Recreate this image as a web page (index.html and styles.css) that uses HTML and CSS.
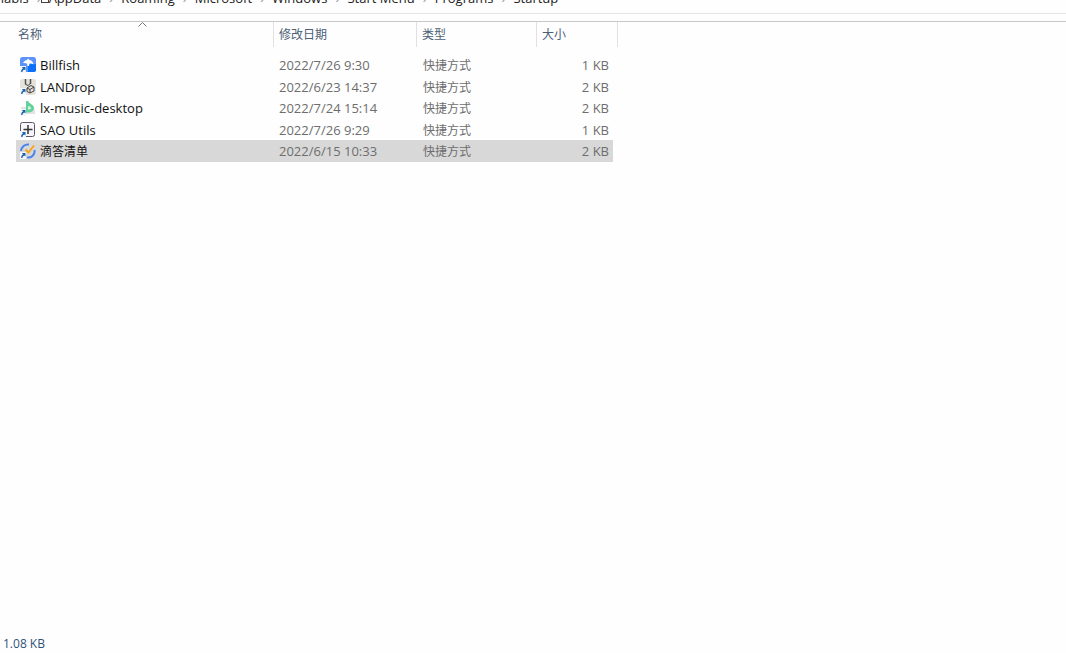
FILE: index.html
```html
<!DOCTYPE html>
<html lang="zh-CN">
<head>
    <meta charset="UTF-8">
    <meta name="viewport" content="width=device-width, initial-scale=1.0">
    <title>Startup</title>
    <link rel="stylesheet" href="styles.css">
</head>
<body>
    <nav class="address">
        <a href="#">nabis</a>
        <span class="sep">›</span>
        <a href="#"><span class="box"></span>AppData</a>
        <span class="sep">›</span>
        <a href="#">Roaming</a>
        <span class="sep">›</span>
        <a href="#">Microsoft</a>
        <span class="sep">›</span>
        <a href="#">Windows</a>
        <span class="sep">›</span>
        <a href="#">Start Menu</a>
        <span class="sep">›</span>
        <a href="#">Programs</a>
        <span class="sep">›</span>
        <a href="#">Startup</a>
    </nav>

    <main class="files">
        <table>
            <colgroup>
                <col class="col-name">
                <col class="col-date">
                <col class="col-type">
                <col class="col-size">
            </colgroup>
            <thead>
                <tr>
                    <th class="name">
                        <button>名称</button>
                        <svg class="sort" width="9" height="5" viewBox="0 0 9 5"><path d="M0.5 4.5 4.5 0.5l4 4" fill="none" stroke="#777"/></svg>
                    </th>
                    <th><button>修改日期</button></th>
                    <th><button>类型</button></th>
                    <th><button>大小</button></th>
                </tr>
            </thead>
            <tbody>
                <tr>
                    <td class="name"><div class="file">
                        <svg class="icon" viewBox="0 0 16 16">
                            <rect width="16" height="15" rx="2.5" fill="#5b93fa"/>
                            <path d="M8 7h8v5.500a2.500 2.500 0 0 1-2.500 2.500H8z" fill="#0b70fa"/>
                            <path d="M3 6C4 4 6 3 7 3l1-1.500L9.500 3C12 3.500 13 5 13.500 7.500 12 6.500 11 6.300 9.500 6.500L9 9H7.500L7 6.500C5.500 6 4.500 5.800 3 6z" fill="#fff"/>
                            <use href="#shortcut"/>
                        </svg>
                        <span>Billfish</span></div></td>
                    <td>2022/7/26 9:30</td>
                    <td class="type">快捷方式</td>
                    <td class="size">1 KB</td>
                </tr>
                <tr>
                    <td class="name"><div class="file">
                        <svg class="icon" viewBox="0 0 16 16">
                            <rect width="16" height="16" rx="2.5" fill="#e5e2dc"/>
                            <path d="M5.500 0v5M10.500 0v5" stroke="#555" stroke-width="1.500"/>
                            <path d="M5 5l3 1.500L11 4M7 9l4-2.500 3 1.500v4l-4 2-3-1.500zM7 9l3 1.500L14 8M10 10.500V14" fill="none" stroke="#454545"/>
                            <use href="#shortcut"/>
                        </svg>
                        <span>LANDrop</span></div></td>
                    <td>2022/6/23 14:37</td>
                    <td class="type">快捷方式</td>
                    <td class="size">2 KB</td>
                </tr>
                <tr>
                    <td class="name"><div class="file">
                        <svg class="icon" viewBox="0 0 16 16">
                            <path d="M1 7h12l2 3v4H1z" fill="#e2e2e5"/>
                            <path d="M6 1h2c1 2.500 6 3.500 6 7s-4 5-8 4.500z" fill="#62d29a"/>
                            <path d="M8 6c2 .5 3 1 3 2s-1 1.500-3 1.500z" fill="#d5f2e3"/>
                            <use href="#shortcut"/>
                        </svg>
                        <span>lx-music-desktop</span></div></td>
                    <td>2022/7/24 15:14</td>
                    <td class="type">快捷方式</td>
                    <td class="size">2 KB</td>
                </tr>
                <tr>
                    <td class="name"><div class="file">
                        <svg class="icon" viewBox="0 0 16 16">
                            <rect x="0.5" y="0.5" width="14" height="14" rx="2" fill="#f7f5f9" stroke="#5b5565"/>
                            <path d="M8 3v9M3.500 7.500h9" stroke="#333" stroke-width="1.500"/>
                            <use href="#shortcut"/>
                        </svg>
                        <span>SAO Utils</span></div></td>
                    <td>2022/7/26 9:29</td>
                    <td class="type">快捷方式</td>
                    <td class="size">1 KB</td>
                </tr>
                <tr class="selected">
                    <td class="name"><div class="file">
                        <svg class="icon" viewBox="0 0 16 16">
                            <path d="M1 8a7 7 0 0 1 8-6.500M14.500 7a6.500 6.500 0 0 1-7.500 7.500" fill="none" stroke="#4a82ee" stroke-width="2"/>
                            <path d="M5.500 6.500l3 3L14 2.500" fill="none" stroke="#f5a623" stroke-width="2"/>
                            <use href="#shortcut"/>
                        </svg>
                        <span class="zh">滴答清单</span></div></td>
                    <td>2022/6/15 10:33</td>
                    <td class="type">快捷方式</td>
                    <td class="size">2 KB</td>
                </tr>
            </tbody>
        </table>
    </main>

    <footer class="status">1.08 KB</footer>

    <!-- shortcut arrow shared by all file icons -->
    <svg class="defs">
        <symbol id="shortcut" viewBox="0 0 16 16">
            <rect y="9" width="6" height="7" fill="#f3f7fb"/>
            <path d="M1.200 15c-.2-2 .6-3 1.800-3.500L2 10h3.500v3.500l-1.200-1C3 13 2.500 13.800 2.500 15z" fill="#1c62a8"/>
        </symbol>
    </svg>
</body>
</html>
```
FILE: styles.css
```css
* { box-sizing: border-box; }
body { font-family: "Open Sans", "Noto Sans CJK SC", sans-serif; font-size: 13px; line-height: 18px; margin: 0; background-color: #fefefe; color: #111; min-height: 100vh; display: flex; flex-direction: column; }

.address { height: 14px; padding-bottom: 6px; display: flex; align-items: flex-end; overflow: hidden; white-space: nowrap; border-bottom: 1px solid #e6e6e8; }
.address a { color: #222; text-decoration: none; }
.address a:first-child { margin-left: -4px; }
.sep { width: 20px; text-align: center; color: #999; }
.box { display: inline-block; width: 8px; height: 8px; margin-left: -8px; border: 1px solid #444; }

.files { flex: 1; margin-top: 7px; border-top: 1px solid #c9c7cc; }
table { table-layout: fixed; width: 602px; margin-left: 16px; border-collapse: separate; border-spacing: 0; }
.col-name { width: 258px; }
.col-date { width: 143px; }
.col-type { width: 120px; }
.col-size { width: 81px; }

th { position: relative; height: 25px; padding: 1px 0 0 5px; text-align: left; border-right: 1px solid #e4dfe6; }
th.name { padding-left: 2px; }
th button { font: inherit; font-size: 12px; font-weight: normal; color: #4c6077; background: none; border: 0; padding: 0; display: block; }
.sort { position: absolute; top: 0; left: 50%; margin-left: -7px; }

tbody::before { content: ""; display: block; height: 7px; }
tbody tr { height: 22px; }
tbody tr:nth-child(even) { height: 21px; }
td { padding: 0 0 0 5px; color: #6d6d6d; white-space: nowrap; }
td.name { padding-left: 4px; color: #111; }
td.type, .zh { font-size: 12px; padding-top: 2px; }
td.type { padding-left: 6px; }
td.size { text-align: right; padding-right: 4px; border-right: 5px solid transparent; background-clip: padding-box; }
.selected td { background-color: #d8d8d8; }

.file { display: flex; align-items: center; gap: 4px; }
.icon { width: 16px; height: 16px; flex: none; }

.status { padding: 0 3px; color: #2f5378; font-size: 12px; }
.defs { position: absolute; width: 0; height: 0; }
```
